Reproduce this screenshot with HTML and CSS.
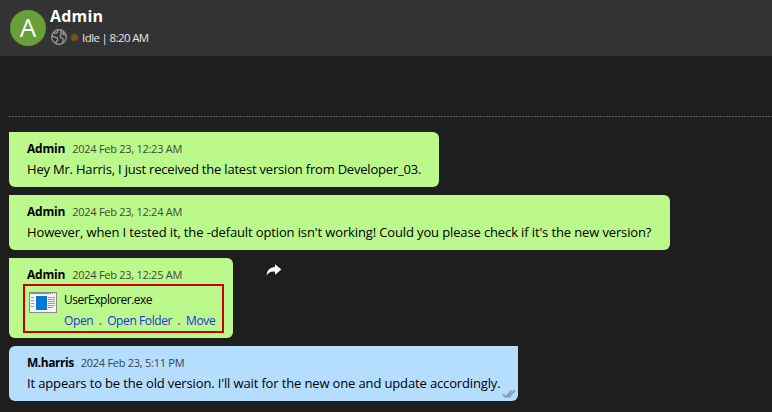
FILE: index.html
```html
<!DOCTYPE html>
<html lang="en">
<head>
<meta charset="utf-8">
<title>Admin</title>
<link rel="stylesheet" href="styles.css">
</head>
<body>
<header class="header">
  <div class="avatar">A</div>
  <div class="who">
    <h1 class="title">Admin</h1>
    <div class="status">
      <svg class="globe" width="16" height="16" viewBox="0 0 16 16" fill="none" stroke="#a0a0a0" stroke-width="1.2">
        <circle cx="8" cy="8" r="7.3"/>
        <path d="M2 3.8 L5.2 4.2 L6.8 2.8 L6 .9 M1 6.3 L3.6 8.2 L6.2 8.8 L6.8 11 L5.2 12.6 L4.9 14.6 M10.8 1.2 L9.6 3.4 L10.6 5 L9 6.6 L9.6 8.8 L11.8 9.2 L12.2 12 L11.2 14.4 M15 6 L12.6 5.6 L12 4 L13.2 3"/>
      </svg>
      <span class="dot"></span>
      <span class="status-text">Idle | 8:20 AM</span>
    </div>
  </div>
</header>
<main class="chat">
  <div class="divider"></div>
  <article class="bubble m1">
    <div class="meta"><b class="name">Admin</b><time class="time">2024 Feb 23, 12:23 AM</time></div>
    <p class="text">Hey Mr. Harris, I just received the latest version from Developer_03.</p>
  </article>
  <article class="bubble m2">
    <div class="meta"><b class="name">Admin</b><time class="time">2024 Feb 23, 12:24 AM</time></div>
    <p class="text">However, when I tested it, the -default option isn't working! Could you please check if it's the new version?</p>
  </article>
  <div class="row">
    <article class="bubble m3">
      <div class="meta"><b class="name">Admin</b><time class="time">2024 Feb 23, 12:25 AM</time></div>
      <div class="file">
        <svg class="exe" width="28" height="21" viewBox="0 0 28 21" shape-rendering="crispEdges">
          <rect width="28" height="21" fill="#8b8b8b"/>
          <rect x="1" y="2" width="26" height="18" fill="#f4f4f4"/>
          <path d="M22 1h1M24 1h1M26 1h1" stroke="#fff"/>
          <rect x="7" y="4" width="11" height="14" fill="#0078d7"/>
          <path d="M2 5.5h3M2 8.5h3M2 11.5h3M2 14.5h3M19 5.5h7M19 7.5h7M19 9.5h7M19 11.5h7M19 13.5h7M19 15.5h5" stroke="#999"/>
        </svg>
        <div class="file-info">
          <div class="file-name">UserExplorer.exe</div>
          <div class="links"><a>Open</a><i>.</i><a>Open Folder</a><i>.</i><a>Move</a></div>
        </div>
      </div>
    </article>
    <svg class="forward" width="16" height="12" viewBox="0 0 16 12"><path d="M9 .3 L15.4 5.4 L9 10.8 V7.7 C5 7.2 2.7 8.4 .6 11.6 C1 6.4 3.8 3.4 9 3.1Z" fill="#fff"/></svg>
  </div>
  <article class="bubble m4">
    <div class="meta"><b class="name">M.harris</b><time class="time">2024 Feb 23, 5:11 PM</time></div>
    <p class="text">It appears to be the old version. I'll wait for the new one and update accordingly.</p>
    <svg class="ticks" width="14" height="10" viewBox="0 0 14 10" fill="none" stroke="#8c9dab" stroke-width="1.9"><path d="M.8 5.4 L4 8 L9.6 1.6M5.6 7 L7 8 L12.8 1.2"/></svg>
  </article>
</main>
</body>
</html>
```

FILE: styles.css
```css
* { box-sizing: border-box; }
body {
  margin: 0;
  height: 412px;
  overflow: hidden;
  background: #1e1e1e;
  color: #000;
  font-family: "Open Sans", "Noto Sans", sans-serif;
}
.header {
  display: flex;
  height: 56px;
  padding: 10px 10px 0;
  gap: 4px;
  background: #333;
}
.avatar {
  width: 36px;
  height: 36px;
  border-radius: 50%;
  background: #689f38;
  color: #fff;
  font-size: 26px;
  line-height: 35px;
  text-align: center;
}
.title {
  margin: -4px 0 0;
  color: #fff;
  font-size: 16px;
  font-weight: 700;
  line-height: 20px;
  letter-spacing: 0.2px;
}
.status {
  display: flex;
  align-items: center;
  height: 20px;
  padding-left: 1px;
}
.dot {
  width: 7px;
  height: 7px;
  margin: 3px 4px 0;
  border-radius: 50%;
  background: #7b5415;
}
.globe { margin-top: 1px; }
.status-text {
  padding-top: 3px;
  color: #e6e6e6;
  font-size: 11.5px;
  letter-spacing: -0.55px;
  word-spacing: -0.3px;
  white-space: nowrap;
}
.chat {
  display: flex;
  flex-direction: column;
  align-items: flex-start;
  gap: 8px;
  padding: 60px 0 0 9px;
}
.divider {
  align-self: stretch;
  height: 1px;
  margin-bottom: 7px;
  background: repeating-linear-gradient(90deg, #5c5c5c 0 2px, #1e1e1e 2px 3px);
}
.bubble {
  position: relative;
  height: 55px;
  padding: 8px 0 0 18px;
  border-radius: 0 6px 6px 6px;
  background: #bbf98d;
  white-space: nowrap;
}
.m1 { width: 430px; }
.m2 { width: 661px; }
.m3 { width: 224px; height: 80px; }
.m4 {
  width: 509px;
  border-radius: 6px 0 6px 6px;
  background: #b5ddff;
}
.meta {
  display: flex;
  align-items: baseline;
  gap: 7px;
  height: 18px;
  line-height: 18px;
}
.name { font-size: 12px; letter-spacing: -0.2px; }
.time { font-size: 11px; letter-spacing: -0.27px; color: #3c4a34; }
.m4 .name { letter-spacing: -0.45px; }
.m4 .time { color: #38444f; }
.text {
  margin: 1px 0 0;
  font-size: 13px;
  line-height: 20px;
  letter-spacing: -0.2px;
}
.m2 .text { letter-spacing: -0.13px; }
.m4 .text { letter-spacing: -0.14px; }
.row { display: flex; gap: 33px; }
.forward { margin-top: 6px; }
.file {
  display: flex;
  gap: 7px;
  width: 201px;
  height: 49px;
  margin-left: -4px;
  padding: 6px 0 0 4px;
  border: 2px solid #c80000;
}
.file-info {
  font-size: 12px;
  line-height: 21px;
  letter-spacing: -0.4px;
  margin-top: -3px;
}
.file-name { letter-spacing: -0.5px; }
.links { display: flex; color: #1a32e0; }
.links i { width: 14px; color: #777; font-weight: 700; text-align: center; font-style: normal; }
.ticks { position: absolute; right: 2px; bottom: 2px; }
```
